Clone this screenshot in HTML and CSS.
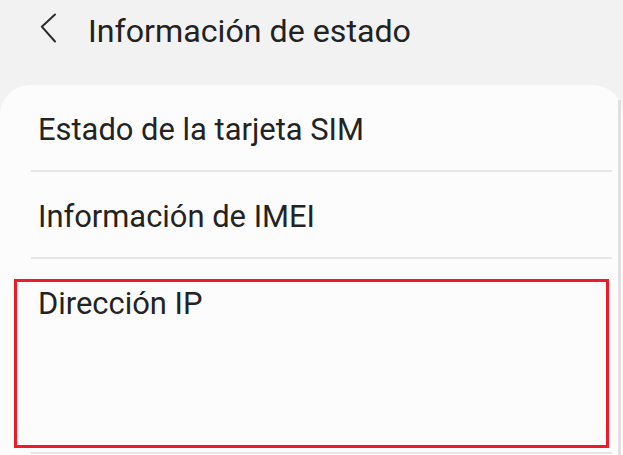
FILE: index.html
```html
<!DOCTYPE html>
<html lang="es">
<head>
<meta charset="utf-8">
<title>Información de estado</title>
<link rel="stylesheet" href="styles.css">
</head>
<body>
<div class="screen">
  <header class="appbar">
    <svg class="back" width="18" height="30" viewBox="0 0 18 30" aria-hidden="true">
      <polyline points="15,1.5 1.8,13.7 15,28.5" fill="none" stroke="#2b2b2b" stroke-width="2" stroke-linecap="round" stroke-linejoin="round"/>
    </svg>
    <h1 class="title">Información de estado</h1>
  </header>
  <main class="card">
    <div class="row">Estado de la tarjeta SIM</div>
    <div class="row">Información de IMEI</div>
    <div class="row row-tall">Dirección IP</div>
  </main>
  <div class="scrollbar"></div>
  <div class="highlight"></div>
</div>
</body>
</html>
```

FILE: styles.css
```css
html, body {
  margin: 0;
  padding: 0;
}
body {
  background: #f2f2f2;
  font-family: Roboto, "Noto Sans", "Liberation Sans", sans-serif;
  color: #232323;
  overflow: hidden;
}
.screen {
  position: relative;
  width: 623px;
  height: 455px;
  overflow: hidden;
}
.appbar {
  display: flex;
  align-items: center;
  height: 85px;
  padding-left: 40px;
  box-sizing: border-box;
  padding-bottom: 24px;
}
.back {
  display: block;
  align-self: flex-start;
  margin-top: 12.5px;
  margin-right: 30px;
}
.title {
  margin: 0;
  font-size: 32.2px;
  font-weight: 400;
  line-height: 36px;
  color: #222222;
}
.card {
  display: flex;
  flex-direction: column;
  background: #fcfcfc;
  border-radius: 30px 30px 0 0;
  padding: 0 11px 0 31px;
  height: 400px;
}
.row {
  padding: 27px 0 22px 7px;
  font-size: 30.9px;
  line-height: 36px;
  border-bottom: 2px solid #e6e6e6;
}
.row-tall {
  min-height: 139px;
  padding-bottom: 27px;
}
.scrollbar {
  position: absolute;
  right: 2px;
  top: 100px;
  bottom: 0;
  width: 3px;
  background: #e0e0e0;
}
.highlight {
  position: absolute;
  left: 14px;
  top: 279px;
  width: 595px;
  height: 169px;
  box-sizing: border-box;
  border: 3px solid #ec1c2b;
}
```
